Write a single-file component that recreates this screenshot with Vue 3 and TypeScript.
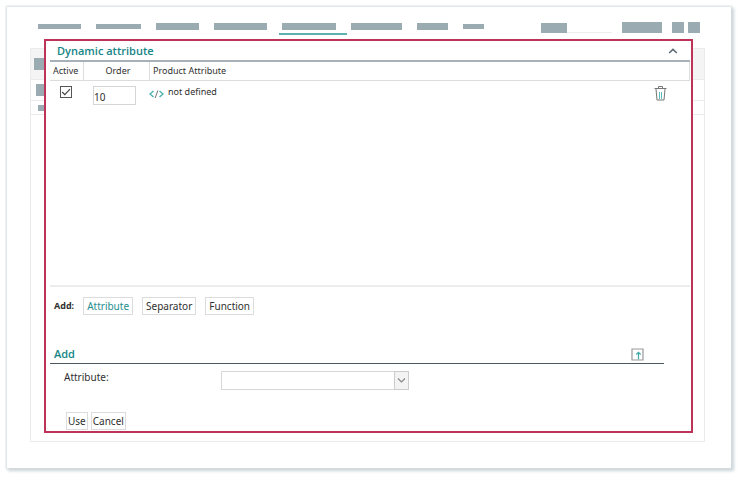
<script setup lang="ts">
import { ref } from 'vue'

type Kind = 'Attribute' | 'Separator' | 'Function'

const kinds: Kind[] = ['Attribute', 'Separator', 'Function']
const selectedKind = ref<Kind>('Attribute')
const active = ref(true)
const order = ref('10')
const attribute = ref('')
const navItems = ['w43 thin', 'w45 thin', 'w43', 'w53', 'w54 current', 'w51', 'w31', 'w21 thin']
</script>

<template>
  <div class="frame">
    <header class="topbar">
      <nav class="nav">
        <span v-for="(item, i) in navItems" :key="i" class="nav-item" :class="item"></span>
      </nav>
      <div class="tools">
        <span class="search"><span class="search-text"></span></span>
        <span class="tool wide"></span>
        <span class="tool"></span>
        <span class="tool last"></span>
      </div>
    </header>

    <main class="workspace">
      <div class="backdrop">
        <div class="strip head"><span class="block"></span></div>
        <div class="strip mid"><span class="block"></span></div>
        <div class="strip low"><span class="block"></span></div>
      </div>

      <section class="dialog">
        <div class="title-row">
          <h1>Dynamic attribute</h1>
          <button class="icon-button" type="button" aria-label="Collapse">
            <svg width="10" height="8" viewBox="0 0 10 8"><path d="M1.2 6 5 2.4 8.8 6" fill="none" stroke="#5d6873" stroke-width="1.5" /></svg>
          </button>
        </div>

        <div class="list">
          <table>
            <colgroup><col class="col-active" /><col class="col-order" /><col /></colgroup>
            <thead>
              <tr><th>Active</th><th class="order-head">Order</th><th>Product Attribute</th></tr>
            </thead>
            <tbody>
              <tr>
                <td class="check-cell">
                  <label class="check">
                    <input v-model="active" type="checkbox" aria-label="Active" />
                    <svg v-if="active" width="12" height="12" viewBox="0 0 12 12"><path d="M2.2 6 4.8 8.6 10 3.2" fill="none" stroke="#444" stroke-width="1.2" /></svg>
                  </label>
                </td>
                <td><input v-model="order" class="order" type="text" aria-label="Order" /></td>
                <td>
                  <div class="attribute-cell">
                    <svg class="code" width="15" height="10" viewBox="0 0 15 10" fill="none">
                      <path d="M4.500 2 1 5l3.500 3M10.500 2 14 5l-3.500 3" stroke="#4bb0b0" stroke-width="1.4" />
                      <path d="M8.8 1.5 6.2 9" stroke="#777" />
                    </svg>
                    <span>not defined</span>
                    <button class="icon-button trash" type="button" aria-label="Delete">
                      <svg width="13" height="15" viewBox="0 0 13 15" fill="none">
                        <path d="M.5 2.500h12M4.500 2V.5h4V2M2 3l1 11h7l1-11" stroke="#777" />
                        <path d="M5.500 6v7M7.500 6v7" stroke="#5dbaba" />
                      </svg>
                    </button>
                  </div>
                </td>
              </tr>
            </tbody>
          </table>
        </div>

        <div class="add-row">
          <strong>Add:</strong>
          <button
            v-for="kind in kinds"
            :key="kind"
            type="button"
            class="button"
            :class="{ selected: kind === selectedKind }"
            @click="selectedKind = kind"
          >{{ kind }}</button>
        </div>

        <div class="add-head">
          <h2>Add</h2>
          <button class="icon-button" type="button" aria-label="Move up">
            <svg width="13" height="13" viewBox="0 0 13 13" fill="none">
              <path d="M1 1h11v11H1z" stroke="#999" stroke-width="1.2" />
              <path d="M7.500 11.500V4.500M5.300 6.500 7.500 4.300l2.200 2.200" stroke="#43aaaa" stroke-width="1.2" />
            </svg>
          </button>
        </div>

        <div class="field">
          <label for="attribute">Attribute:</label>
          <div class="select">
            <select id="attribute" v-model="attribute"><option value=""></option></select>
            <span class="arrow">
              <svg width="9" height="7" viewBox="0 0 9 7"><path d="M1 1.500 4.500 5 8 1.500" fill="none" stroke="#888" stroke-width="1.200" /></svg>
            </span>
          </div>
        </div>

        <div class="actions">
          <button class="button" type="button">Use</button>
          <button class="button" type="button">Cancel</button>
        </div>
      </section>
    </main>
  </div>
</template>

<style>
body {
  background: #fff;
}
</style>

<style scoped>
* {
  box-sizing: border-box;
}
.frame {
  margin: 7px 10px 10px 7px;
  padding: 15px 26px 26px 23px;
  background: #fff;
  box-shadow: 0 0 2px 1px #d5dcdf, 2px 2px 3px 1px #cdd6da;
  font: 10px/14px "Noto Sans", "Open Sans", sans-serif;
  color: #303030;
}
.topbar {
  display: flex;
  justify-content: space-between;
  height: 17px;
  padding: 0 5px 0 8px;
}
.nav {
  display: flex;
  gap: 15px;
}
.nav-item {
  height: 7px;
  margin-top: 1px;
  background: #9aabb1;
}
.thin {
  height: 5px;
  margin-top: 2px;
}
.w21 { width: 21px; }
.w31 { width: 31px; }
.w43 { width: 43px; }
.w45 { width: 45px; }
.w51 { width: 51px; }
.w53 { width: 53px; }
.w54 { width: 54px; }
.current {
  position: relative;
}
.current::after {
  content: "";
  position: absolute;
  inset: 10px -11px auto -3px;
  height: 2px;
  background: #5fb0b1;
}
.tools {
  display: flex;
}
.search {
  width: 71px;
  height: 11px;
  margin-right: 10px;
  border-bottom: 1px solid #eee;
}
.search-text {
  display: block;
  width: 26px;
  height: 10px;
  margin-top: 1px;
  background: #9aabb1;
}
.tool {
  width: 12px;
  height: 11px;
  background: #9aabb1;
}
.wide {
  width: 40px;
  margin-right: 10px;
}
.last {
  margin-left: 4px;
}
.workspace {
  position: relative;
  padding: 0 12px 9px 14px;
}
.backdrop {
  position: absolute;
  inset: 9px 0 0;
  border: 1px solid #ebebeb;
}
.strip {
  display: flex;
  align-items: center;
  border-bottom: 1px solid #ebebeb;
}
.head { height: 31px; padding-left: 3px; background: #f4f4f4; }
.mid { height: 21px; padding-left: 5px; }
.low { height: 14px; padding-left: 7px; }
.block {
  width: 16px;
  height: 12px;
  background: #9aabb1;
}
.low .block {
  height: 6px;
}
.dialog {
  position: relative;
  padding: 0 1px 1px 4px;
  border: 2px solid #be3459;
  background: #fff;
}
h1,
h2 {
  margin: 0;
  font-family: "Open Sans", "Noto Sans", sans-serif;
  font-size: 11px;
  line-height: 18px;
  font-weight: 600;
  color: #158486;
}
.title-row {
  display: flex;
  justify-content: space-between;
  align-items: center;
  height: 21px;
  padding: 0 12px 0 7px;
  border-bottom: 2px solid #a8b0ba;
}
button,
input,
select {
  margin: 0;
  font: inherit;
  color: inherit;
}
.icon-button {
  display: flex;
  padding: 0;
  border: 0;
  background: none;
}
.list {
  min-height: 225px;
  border-bottom: 2px solid #ededed;
}
table {
  width: 100%;
  border-collapse: separate;
  border-spacing: 0;
  table-layout: fixed;
}
.col-active { width: 34px; }
.col-order { width: 66px; }
th {
  height: 19px;
  padding: 0 3px;
  border-right: 1px solid #ddd;
  border-bottom: 1px solid #ddd;
  font-size: 9px;
  line-height: 14px;
  font-weight: 400;
  text-align: left;
  white-space: nowrap;
}
.order-head {
  padding-left: 6px;
  text-align: center;
}
td {
  padding: 5px 0 0;
  vertical-align: top;
}
.check-cell {
  padding-left: 10px;
}
.check {
  display: grid;
  width: 12px;
  height: 12px;
}
.check > * {
  grid-area: 1 / 1;
}
.check input {
  width: 12px;
  height: 12px;
  appearance: none;
  border: 1px solid #555;
}
.check svg {
  pointer-events: none;
}
.order {
  display: block;
  width: 43px;
  height: 19px;
  margin-left: 9px;
  padding: 2px 0 0;
  border: 1px solid #d5d5d5;
  background: #fff;
}
.attribute-cell {
  display: flex;
  gap: 4px;
  margin-left: -1px;
}
.attribute-cell span {
  font-size: 9px;
  line-height: 12px;
}
.code {
  margin-top: 3px;
}
.trash {
  margin-left: auto;
  margin-right: 23px;
}
.add-row {
  display: flex;
  align-items: center;
  gap: 9px;
  padding: 10px 4px 0;
}
strong {
  font-size: 9px;
}
.button {
  height: 18px;
  padding: 0 3px;
  border: 1px solid #dcdcdc;
  background: #fff;
  line-height: 16px;
}
.selected {
  color: #258e8f;
}
.add-head {
  display: flex;
  justify-content: space-between;
  align-items: center;
  margin: 30px 26px 0 0;
  padding: 0 20px 0 4px;
  border-bottom: 1px solid #4b5963;
}
.field {
  display: flex;
  margin-top: 7px;
  padding-left: 14px;
}
.field label {
  width: 157px;
  line-height: 12px;
}
.select {
  display: grid;
  width: 188px;
  height: 19px;
}
.select > * {
  grid-area: 1 / 1;
}
select {
  width: 100%;
  height: 100%;
  appearance: none;
  border: 1px solid #d8d8d8;
  border-radius: 0;
  background: #fff;
}
.arrow {
  display: flex;
  align-items: center;
  justify-content: center;
  justify-self: end;
  width: 15px;
  border: 1px solid #ccc;
  background: #f3f3f3;
  pointer-events: none;
}
.actions {
  display: flex;
  gap: 3px;
  margin-top: 22px;
  padding-left: 16px;
}
.actions .button {
  padding: 0 1px;
}
</style>
